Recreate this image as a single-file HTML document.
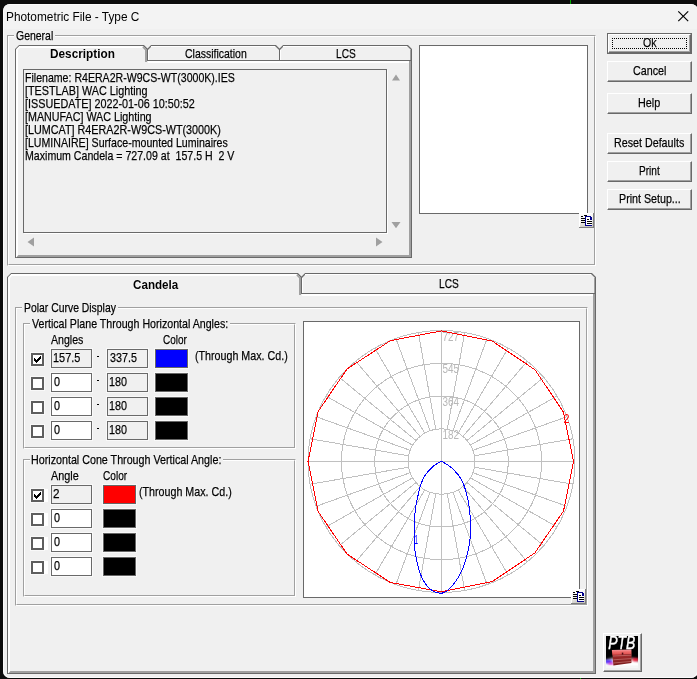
<!DOCTYPE html>
<html lang="en"><head><meta charset="utf-8"><title>Photometric File - Type C</title>
<style>
html,body{margin:0;padding:0}
body{width:697px;height:679px;overflow:hidden;background:#0c0c0c;position:relative;font:13px/13px "Liberation Sans",sans-serif;color:#000}
#win{position:absolute;left:3px;top:4px;width:695px;height:674px;border-radius:7px;background:#f0f0f0;box-shadow:inset 0 0 0 1px #fbfbfb;overflow:hidden}
#title{position:absolute;left:1px;top:1px;width:698px;height:24px;background:#f3f3f3}
#ui div{position:absolute}
.t{position:absolute;white-space:pre;font:13px/13px "Liberation Sans",sans-serif;transform-origin:0 0;text-shadow:0 0 1px #fff,0 0 1px #fff;-webkit-text-stroke:.25px #000}
.t.b{font-weight:bold;-webkit-text-stroke:0}
.t.s12{font-size:12px;line-height:12px;-webkit-text-stroke:0;text-shadow:none}
.grp{box-sizing:border-box;border:1px solid #a0a0a0;border-right-color:#fff;border-bottom-color:#fff}
.grp i{position:absolute;left:0;top:0;right:0;bottom:0;border:1px solid #fff;border-right-color:#a0a0a0;border-bottom-color:#a0a0a0}
.btn{box-sizing:border-box;background:#f0f0f0;border:1px solid #fff;border-right-color:#696969;border-bottom-color:#696969}
.btn i{position:absolute;left:0;top:0;right:0;bottom:0;border-right:1px solid #a0a0a0;border-bottom:1px solid #a0a0a0}
.btn.def{border-color:#696969;}
.btn.def i{left:0;top:0;right:0;bottom:0;border:1px solid #fff;border-right-color:#696969;border-bottom-color:#696969;box-shadow:inset -1px -1px 0 #a0a0a0}
.btn.def b{position:absolute;left:4px;top:4px;right:4px;bottom:4px;border:1px dotted #000}
svg{position:absolute;left:0;top:0;will-change:transform}
.fld,.hl{box-shadow:0 0 0 1px rgba(255,255,255,.6)}
#txt{position:absolute;left:0;top:0;width:697px;height:679px;will-change:transform}
</style></head>
<body>
<div id="win"><div id="title"></div></div>
<div style="position:absolute;left:570px;top:0;width:1px;height:4px;background:#00aa00"></div>
<div style="position:absolute;left:580px;top:678px;width:1px;height:1px;background:#00aa00"></div>
<div id="ui">
<div class="grp" style="left:7px;top:35px;width:589px;height:231px"><i></i></div>
<div style="left:14px;top:35px;width:41px;height:2px;background:#f0f0f0"></div>
<div class="grp" style="left:15px;top:307px;width:573px;height:299px"><i></i></div>
<div style="left:22px;top:307px;width:96px;height:2px;background:#f0f0f0"></div>
<div class="grp" style="left:23px;top:323px;width:273px;height:126px"><i></i></div>
<div style="left:30px;top:323px;width:200px;height:2px;background:#f0f0f0"></div>
<div class="grp" style="left:23px;top:459px;width:273px;height:138px"><i></i></div>
<div style="left:30px;top:459px;width:193px;height:2px;background:#f0f0f0"></div>
<div style="left:23px;top:69px;width:364px;height:164px;border:1px solid #696969;box-shadow:1px 1px 0 #fff;box-sizing:border-box"></div>
<div style="left:419px;top:45px;width:169px;height:169px;border:1px solid #696969;background:#fff;box-sizing:border-box"></div>
<div style="left:303px;top:321px;width:277px;height:277px;border:1px solid #696969;background:#fff;box-sizing:border-box"></div>
<div class="btn def" style="left:607px;top:33px;width:85px;height:21px;"><i></i><b></b></div>
<div class="btn" style="left:607px;top:61px;width:85px;height:21px;"><i></i></div>
<div class="btn" style="left:607px;top:93px;width:85px;height:21px;"><i></i></div>
<div class="btn" style="left:607px;top:133px;width:85px;height:21px;"><i></i></div>
<div class="btn" style="left:607px;top:161px;width:85px;height:21px;"><i></i></div>
<div class="btn" style="left:607px;top:189px;width:85px;height:21px;"><i></i></div>
<div class="btn" style="left:603px;top:633px;width:39px;height:39px;"><i></i></div>
<div class="hl" style="left:31px;top:353px;width:13px;height:13px;border:2px solid #5e5e5e;box-sizing:border-box;background:#fff"></div>
<div class="fld" style="left:51px;top:349px;width:41px;height:19px;border:1px solid #696969;box-sizing:border-box;background:#f0f0f0"></div>
<div class="fld" style="left:107px;top:349px;width:41px;height:19px;border:1px solid #696969;box-sizing:border-box;background:#f0f0f0"></div>
<div class="hl" style="left:155px;top:349px;width:33px;height:19px;border:1px solid #666;box-sizing:border-box;background:#0000ff"></div>
<div class="hl" style="left:31px;top:377px;width:13px;height:13px;border:2px solid #5e5e5e;box-sizing:border-box;background:#fff"></div>
<div class="fld" style="left:51px;top:373px;width:41px;height:19px;border:1px solid #696969;box-sizing:border-box;background:#fff"></div>
<div class="fld" style="left:107px;top:373px;width:41px;height:19px;border:1px solid #696969;box-sizing:border-box;background:#f0f0f0"></div>
<div class="hl" style="left:155px;top:373px;width:33px;height:19px;border:1px solid #666;box-sizing:border-box;background:#000"></div>
<div class="hl" style="left:31px;top:401px;width:13px;height:13px;border:2px solid #5e5e5e;box-sizing:border-box;background:#fff"></div>
<div class="fld" style="left:51px;top:397px;width:41px;height:19px;border:1px solid #696969;box-sizing:border-box;background:#fff"></div>
<div class="fld" style="left:107px;top:397px;width:41px;height:19px;border:1px solid #696969;box-sizing:border-box;background:#f0f0f0"></div>
<div class="hl" style="left:155px;top:397px;width:33px;height:19px;border:1px solid #666;box-sizing:border-box;background:#000"></div>
<div class="hl" style="left:31px;top:425px;width:13px;height:13px;border:2px solid #5e5e5e;box-sizing:border-box;background:#fff"></div>
<div class="fld" style="left:51px;top:421px;width:41px;height:19px;border:1px solid #696969;box-sizing:border-box;background:#fff"></div>
<div class="fld" style="left:107px;top:421px;width:41px;height:19px;border:1px solid #696969;box-sizing:border-box;background:#f0f0f0"></div>
<div class="hl" style="left:155px;top:421px;width:33px;height:19px;border:1px solid #666;box-sizing:border-box;background:#000"></div>
<div style="left:44px;top:489px;width:4px;height:13px;background:#fff"></div>
<div class="hl" style="left:31px;top:489px;width:13px;height:13px;border:2px solid #5e5e5e;box-sizing:border-box;background:#fff"></div>
<div class="fld" style="left:51px;top:485px;width:41px;height:19px;border:1px solid #696969;box-sizing:border-box;background:#f0f0f0"></div>
<div class="hl" style="left:103px;top:485px;width:33px;height:19px;border:1px solid #666;box-sizing:border-box;background:#ff0000"></div>
<div style="left:44px;top:513px;width:4px;height:13px;background:#fff"></div>
<div class="hl" style="left:31px;top:513px;width:13px;height:13px;border:2px solid #5e5e5e;box-sizing:border-box;background:#fff"></div>
<div class="fld" style="left:51px;top:509px;width:41px;height:19px;border:1px solid #696969;box-sizing:border-box;background:#fff"></div>
<div class="hl" style="left:103px;top:509px;width:33px;height:19px;border:1px solid #666;box-sizing:border-box;background:#000"></div>
<div style="left:44px;top:537px;width:4px;height:13px;background:#fff"></div>
<div class="hl" style="left:31px;top:537px;width:13px;height:13px;border:2px solid #5e5e5e;box-sizing:border-box;background:#fff"></div>
<div class="fld" style="left:51px;top:533px;width:41px;height:19px;border:1px solid #696969;box-sizing:border-box;background:#fff"></div>
<div class="hl" style="left:103px;top:533px;width:33px;height:19px;border:1px solid #666;box-sizing:border-box;background:#000"></div>
<div style="left:44px;top:561px;width:4px;height:13px;background:#fff"></div>
<div class="hl" style="left:31px;top:561px;width:13px;height:13px;border:2px solid #5e5e5e;box-sizing:border-box;background:#fff"></div>
<div class="fld" style="left:51px;top:557px;width:41px;height:19px;border:1px solid #696969;box-sizing:border-box;background:#fff"></div>
<div class="hl" style="left:103px;top:557px;width:33px;height:19px;border:1px solid #666;box-sizing:border-box;background:#000"></div>
</div>
<svg width="697" height="679" viewBox="0 0 697 679" shape-rendering="crispEdges">
<defs>
<linearGradient id="ibg" x1="0" y1="0" x2="0.3" y2="1"><stop offset="0" stop-color="#fff"/><stop offset=".55" stop-color="#f4f3f0"/><stop offset="1" stop-color="#c8c6c0"/></linearGradient>
<linearGradient id="glow" x1="0" y1="0" x2="0" y2="1"><stop offset="0" stop-color="#000"/><stop offset=".35" stop-color="#3a2030"/><stop offset=".6" stop-color="#e8d8e0"/><stop offset=".8" stop-color="#fff"/><stop offset="1" stop-color="#f4f4f4"/></linearGradient>
<linearGradient id="blu" x1="0" y1="0" x2="0" y2="1"><stop offset="0" stop-color="#8080ff" stop-opacity="0"/><stop offset=".45" stop-color="#7040ff"/><stop offset=".75" stop-color="#c020e0"/><stop offset="1" stop-color="#ff60a0" stop-opacity="0"/></linearGradient>
<linearGradient id="redg" x1="0" y1="0" x2="0" y2="1"><stop offset="0" stop-color="#ff0020" stop-opacity="0"/><stop offset=".5" stop-color="#ff2040"/><stop offset="1" stop-color="#ff8090" stop-opacity="0"/></linearGradient>
<clipPath id="c32"><rect width="32" height="32"/></clipPath>
<filter id="bl1" x="-50%" y="-100%" width="200%" height="300%"><feGaussianBlur stdDeviation="1"/></filter>
<filter id="bl2" x="-20%" y="-50%" width="140%" height="200%"><feGaussianBlur stdDeviation="1.6"/></filter>
<linearGradient id="lid" x1="0" y1="0" x2="0" y2="1"><stop offset="0" stop-color="#f59aa0"/><stop offset=".4" stop-color="#ee6a68"/><stop offset="1" stop-color="#d84848"/></linearGradient>
<linearGradient id="front" x1="0" y1="0" x2="0" y2="1"><stop offset="0" stop-color="#a42c2c"/><stop offset="1" stop-color="#781a1a"/></linearGradient>
</defs>
<rect x="15" y="49" width="1" height="209" fill="#696969"/>
<rect x="16" y="49" width="2" height="206" fill="#fff"/>
<rect x="411" y="49" width="1" height="209" fill="#696969"/>
<rect x="409" y="61" width="2" height="196" fill="#a0a0a0"/>
<rect x="410" y="50" width="1" height="10" fill="#a0a0a0"/>
<rect x="15" y="257" width="397" height="1" fill="#696969"/>
<rect x="17" y="255" width="394" height="2" fill="#a0a0a0"/>
<path d="M16 255h2.4l-2.4 2.4z" fill="#fff" shape-rendering="auto"/>
<rect x="147" y="60" width="264" height="1" fill="#696969"/>
<rect x="148" y="61" width="261" height="2" fill="#fff"/>
<line x1="15.5" y1="49.5" x2="19.5" y2="45.5" stroke="#696969" stroke-width="1.2" shape-rendering="auto"/>
<rect x="19" y="45" width="125" height="1" fill="#696969"/>
<rect x="19" y="46" width="124" height="2" fill="#fff"/>
<line x1="16.6" y1="50" x2="20" y2="46.6" stroke="#fff" stroke-width="1.8" shape-rendering="auto"/>
<line x1="143.5" y1="45.5" x2="147.5" y2="49.5" stroke="#696969" stroke-width="1.2" shape-rendering="auto"/>
<line x1="142.8" y1="46.8" x2="145.4" y2="49.4" stroke="#a0a0a0" stroke-width="1.6" shape-rendering="auto"/>
<rect x="145" y="49" width="2" height="13" fill="#a0a0a0"/>
<rect x="147" y="49" width="1" height="12" fill="#696969"/>
<line x1="147.5" y1="49.5" x2="151.5" y2="45.5" stroke="#696969" stroke-width="1.2" shape-rendering="auto"/>
<rect x="151" y="45" width="125" height="1" fill="#696969"/>
<rect x="151" y="46" width="124" height="1" fill="#fff"/>
<rect x="148" y="50" width="1" height="10" fill="#fff"/>
<line x1="275.5" y1="45.5" x2="279.5" y2="49.5" stroke="#696969" stroke-width="1.2" shape-rendering="auto"/>
<rect x="279" y="49" width="1" height="12" fill="#696969"/>
<line x1="279.5" y1="49.5" x2="283.5" y2="45.5" stroke="#696969" stroke-width="1.2" shape-rendering="auto"/>
<rect x="283" y="45" width="125" height="1" fill="#696969"/>
<rect x="283" y="46" width="124" height="1" fill="#fff"/>
<rect x="280" y="50" width="1" height="10" fill="#fff"/>
<line x1="407.5" y1="45.5" x2="411.5" y2="49.5" stroke="#696969" stroke-width="1.2" shape-rendering="auto"/>
<rect x="7" y="277" width="1" height="397" fill="#696969"/>
<rect x="8" y="277" width="2" height="394" fill="#fff"/>
<rect x="595" y="277" width="1" height="397" fill="#696969"/>
<rect x="593" y="294" width="2" height="379" fill="#a0a0a0"/>
<rect x="594" y="278" width="1" height="15" fill="#a0a0a0"/>
<rect x="7" y="673" width="589" height="1" fill="#696969"/>
<rect x="9" y="671" width="586" height="2" fill="#a0a0a0"/>
<path d="M8 671h2.4l-2.4 2.4z" fill="#fff" shape-rendering="auto"/>
<rect x="301" y="293" width="294" height="1" fill="#696969"/>
<rect x="302" y="294" width="291" height="2" fill="#fff"/>
<line x1="7.5" y1="277.5" x2="11.5" y2="273.5" stroke="#696969" stroke-width="1.2" shape-rendering="auto"/>
<rect x="11" y="273" width="287" height="1" fill="#696969"/>
<rect x="11" y="274" width="286" height="2" fill="#fff"/>
<line x1="8.6" y1="278" x2="12" y2="274.6" stroke="#fff" stroke-width="1.8" shape-rendering="auto"/>
<line x1="297.5" y1="273.5" x2="301.5" y2="277.5" stroke="#696969" stroke-width="1.2" shape-rendering="auto"/>
<line x1="296.8" y1="274.8" x2="299.4" y2="277.4" stroke="#a0a0a0" stroke-width="1.6" shape-rendering="auto"/>
<rect x="299" y="277" width="2" height="18" fill="#a0a0a0"/>
<rect x="301" y="277" width="1" height="17" fill="#696969"/>
<line x1="301.5" y1="277.5" x2="305.5" y2="273.5" stroke="#696969" stroke-width="1.2" shape-rendering="auto"/>
<rect x="305" y="273" width="287" height="1" fill="#696969"/>
<rect x="305" y="274" width="286" height="1" fill="#fff"/>
<rect x="302" y="278" width="1" height="15" fill="#fff"/>
<line x1="591.5" y1="273.5" x2="595.5" y2="277.5" stroke="#696969" stroke-width="1.2" shape-rendering="auto"/>
<path d="M392 80.6L396 74.6l4 6z M391.5 222h9L396 228.2z M382.5 242l-6.5-4.5v9z M27.5 242l6.5-4.5v9z" fill="#a0a0a0" shape-rendering="auto"/>
<rect x="34" y="358" width="1" height="3" fill="#000"/>
<rect x="35" y="359" width="1" height="3" fill="#000"/>
<rect x="36" y="360" width="1" height="3" fill="#000"/>
<rect x="37" y="359" width="1" height="3" fill="#000"/>
<rect x="38" y="358" width="1" height="3" fill="#000"/>
<rect x="39" y="357" width="1" height="3" fill="#000"/>
<rect x="40" y="356" width="1" height="3" fill="#000"/>
<rect x="97" y="356" width="2" height="1" fill="#000"/>
<rect x="97" y="380" width="2" height="1" fill="#000"/>
<rect x="97" y="404" width="2" height="1" fill="#000"/>
<rect x="97" y="428" width="2" height="1" fill="#000"/>
<rect x="34" y="494" width="1" height="3" fill="#000"/>
<rect x="35" y="495" width="1" height="3" fill="#000"/>
<rect x="36" y="496" width="1" height="3" fill="#000"/>
<rect x="37" y="495" width="1" height="3" fill="#000"/>
<rect x="38" y="494" width="1" height="3" fill="#000"/>
<rect x="39" y="493" width="1" height="3" fill="#000"/>
<rect x="40" y="492" width="1" height="3" fill="#000"/>
<line x1="678.3" y1="11.3" x2="688.2" y2="21.2" stroke="#000" stroke-width="1.15" shape-rendering="auto"/>
<line x1="688.2" y1="11.3" x2="678.3" y2="21.2" stroke="#000" stroke-width="1.15" shape-rendering="auto"/>
<g transform="translate(579,213)"><rect x="0" y="0" width="15" height="15" fill="url(#ibg)"/><rect x="0" y="0" width="15" height="1" fill="#fff"/><rect x="0" y="0" width="1" height="15" fill="#fff"/><rect x="14" y="0" width="1" height="15" fill="#808080"/><rect x="0" y="14" width="15" height="1" fill="#808080"/><path d="M2 3h2v1h-2z M2 5h4v1h-4z M2 7h4v1h-4z M2 9h4v1h-4z M5 2h3v1h-3z" fill="#000"/><path d="M6 3h6v1h1v3h-2v-3h-4v8h6v1h-7z" fill="#00008b"/><path d="M7 4h4v3h2v5h-6z" fill="#fff"/><path d="M8 6h2v1h-2z M8 8h5v1h-5z M8 10h5v1h-5z" fill="#000"/></g>
<g transform="translate(571,589)"><rect x="0" y="0" width="15" height="15" fill="url(#ibg)"/><rect x="0" y="0" width="15" height="1" fill="#fff"/><rect x="0" y="0" width="1" height="15" fill="#fff"/><rect x="14" y="0" width="1" height="15" fill="#808080"/><rect x="0" y="14" width="15" height="1" fill="#808080"/><path d="M2 3h2v1h-2z M2 5h4v1h-4z M2 7h4v1h-4z M2 9h4v1h-4z M5 2h3v1h-3z" fill="#000"/><path d="M6 3h6v1h1v3h-2v-3h-4v8h6v1h-7z" fill="#00008b"/><path d="M7 4h4v3h2v5h-6z" fill="#fff"/><path d="M8 6h2v1h-2z M8 8h5v1h-5z M8 10h5v1h-5z" fill="#000"/></g>
<g fill="none" stroke="#c0c0c0" stroke-width="1" shape-rendering="crispEdges"><ellipse cx="441.5" cy="461.5" rx="133.50" ry="131.00"/><ellipse cx="441.5" cy="461.5" rx="100.12" ry="98.25"/><ellipse cx="441.5" cy="461.5" rx="66.75" ry="65.50"/><ellipse cx="441.5" cy="461.5" rx="33.38" ry="32.75"/><line x1="447.30" y1="429.25" x2="464.68" y2="332.49"/><line x1="452.91" y1="430.73" x2="487.16" y2="338.40"/><line x1="458.19" y1="433.14" x2="508.25" y2="348.05"/><line x1="462.95" y1="436.41" x2="527.31" y2="361.15"/><line x1="467.07" y1="440.45" x2="543.77" y2="377.29"/><line x1="470.40" y1="445.12" x2="557.11" y2="396.00"/><line x1="472.86" y1="450.30" x2="566.95" y2="416.70"/><line x1="474.37" y1="455.81" x2="572.97" y2="438.75"/><line x1="474.37" y1="467.19" x2="572.97" y2="484.25"/><line x1="472.86" y1="472.70" x2="566.95" y2="506.30"/><line x1="470.40" y1="477.88" x2="557.11" y2="527.00"/><line x1="467.07" y1="482.55" x2="543.77" y2="545.71"/><line x1="462.95" y1="486.59" x2="527.31" y2="561.85"/><line x1="458.19" y1="489.86" x2="508.25" y2="574.95"/><line x1="452.91" y1="492.27" x2="487.16" y2="584.60"/><line x1="447.30" y1="493.75" x2="464.68" y2="590.51"/><line x1="435.70" y1="493.75" x2="418.32" y2="590.51"/><line x1="430.09" y1="492.27" x2="395.84" y2="584.60"/><line x1="424.81" y1="489.86" x2="374.75" y2="574.95"/><line x1="420.05" y1="486.59" x2="355.69" y2="561.85"/><line x1="415.93" y1="482.55" x2="339.23" y2="545.71"/><line x1="412.60" y1="477.88" x2="325.89" y2="527.00"/><line x1="410.14" y1="472.70" x2="316.05" y2="506.30"/><line x1="408.63" y1="467.19" x2="310.03" y2="484.25"/><line x1="408.63" y1="455.81" x2="310.03" y2="438.75"/><line x1="410.14" y1="450.30" x2="316.05" y2="416.70"/><line x1="412.60" y1="445.12" x2="325.89" y2="396.00"/><line x1="415.93" y1="440.45" x2="339.23" y2="377.29"/><line x1="420.05" y1="436.41" x2="355.69" y2="361.15"/><line x1="424.81" y1="433.14" x2="374.75" y2="348.05"/><line x1="430.09" y1="430.73" x2="395.84" y2="338.40"/><line x1="435.70" y1="429.25" x2="418.32" y2="332.49"/><line x1="308.0" y1="461.5" x2="575.0" y2="461.5"/><line x1="441.5" y1="330.5" x2="441.5" y2="592.5"/></g>
<text x="442.5" y="340.5" font-family="Liberation Sans, sans-serif" font-size="13" fill="#b8b8b8" textLength="16.5" lengthAdjust="spacingAndGlyphs">727</text>
<text x="442.5" y="373.2" font-family="Liberation Sans, sans-serif" font-size="13" fill="#b8b8b8" textLength="16.5" lengthAdjust="spacingAndGlyphs">545</text>
<text x="442.5" y="406.0" font-family="Liberation Sans, sans-serif" font-size="13" fill="#b8b8b8" textLength="16.5" lengthAdjust="spacingAndGlyphs">364</text>
<text x="442.5" y="438.8" font-family="Liberation Sans, sans-serif" font-size="13" fill="#b8b8b8" textLength="16.5" lengthAdjust="spacingAndGlyphs">182</text>
<polygon points="441.5,330.9 492.3,341.1 535.0,369.8 563.4,412.0 573.5,461.5 563.5,511.1 534.8,553.0 492.2,581.6 441.5,591.8 390.4,582.5 347.1,554.1 318.2,511.6 308.0,461.5 318.2,411.4 347.1,368.9 390.5,340.6" fill="none" stroke="#ff0000" stroke-width="1" shape-rendering="crispEdges"/>
<path d="M441.5 461.5L442.9 462.1L443.9 462.7L445.2 463.4L446.4 464.1L447.7 465.0L449.0 465.9L450.3 466.8L451.5 467.8L452.6 468.8L453.7 469.8L454.7 470.9L455.7 472.0L456.8 473.2L457.9 474.5L458.9 475.8L459.9 477.2L460.8 478.5L461.5 479.8L462.1 481.0L462.7 482.3L463.3 483.6L463.8 484.9L464.3 486.3L464.8 487.8L465.3 489.3L465.7 490.8L466.2 492.4L466.6 494.1L467.0 495.8L467.4 497.7L467.9 499.7L468.3 501.8L468.6 503.9L469.0 506.1L469.3 508.5L469.6 511.0L469.9 513.6L470.2 516.3L470.4 519.1L470.5 521.9L470.6 524.9L470.6 527.9L470.6 531.0L470.4 534.2L470.2 537.4L469.9 540.6L469.4 543.9L468.9 547.1L468.2 550.3L467.5 553.5L466.6 556.7L465.7 559.9L464.6 563.1L463.5 566.4L462.2 569.6L460.8 572.7L459.3 575.6L457.7 578.3L455.9 580.9L454.1 583.4L452.2 585.9L450.2 588.1L448.1 590.1L446.0 591.5L443.8 592.4L441.5 593.5L439.2 593.1L437.0 592.7L434.8 591.9L432.6 590.8L430.5 589.3L428.5 587.5L426.5 585.3L424.7 582.8L423.0 579.9L421.5 576.7L420.1 573.3L418.9 569.6L417.8 565.7L416.9 561.7L416.1 557.8L415.4 553.9L414.9 550.0L414.5 545.8L414.3 541.6L414.3 537.4L414.3 533.5L414.3 529.8L414.4 526.4L414.4 523.2L414.5 520.2L414.7 517.4L414.8 514.6L415.1 511.9L415.4 509.3L415.8 506.8L416.1 504.3L416.6 502.0L417.0 499.7L417.5 497.6L418.0 495.5L418.5 493.7L418.8 492.1L419.1 490.6L419.4 489.2L419.8 487.7L420.2 486.3L420.7 485.0L421.2 483.6L421.7 482.3L422.2 481.1L422.7 479.9L423.2 478.8L423.8 477.7L424.4 476.6L425.0 475.5L425.7 474.5L426.5 473.4L427.3 472.4L428.3 471.3L429.3 470.2L430.4 469.1L431.3 468.2L432.1 467.5L432.8 466.8L433.4 466.2L434.1 465.7L434.7 465.2L435.4 464.7L436.1 464.2L436.8 463.7L437.6 463.3L438.5 462.8L439.4 462.3L440.3 462.0L441.5 461.5Z" fill="none" stroke="#0000ff" stroke-width="1" stroke-linejoin="round" shape-rendering="crispEdges"/>
<text x="414.6" y="544" font-family="Liberation Sans, sans-serif" font-size="13" fill="#0000ff" textLength="3.6" lengthAdjust="spacingAndGlyphs">1</text>
<text x="563.6" y="423" font-family="Liberation Sans, sans-serif" font-size="13" fill="#ff0000" textLength="6" lengthAdjust="spacingAndGlyphs">2</text>
<g transform="translate(606,636)" clip-path="url(#c32)" shape-rendering="auto">
<rect width="32" height="32" fill="#000"/>
<ellipse cx="16" cy="30" rx="21" ry="8.5" fill="#fff" filter="url(#bl2)"/>
<ellipse cx="2.5" cy="25.6" rx="4.2" ry="1.9" fill="#4a28ff" filter="url(#bl1)"/>
<ellipse cx="5" cy="27.6" rx="3" ry="1.2" fill="#e020c0" filter="url(#bl1)"/>
<ellipse cx="29.5" cy="23.6" rx="3.6" ry="1.6" fill="#ff1030" filter="url(#bl1)"/>
<rect y="29.5" width="32" height="2.5" fill="#f6f6f6"/>
<path d="M5.8 14L25.4 13.6L25.6 18.4L6.4 19.2z" fill="url(#lid)"/>
<path d="M6.4 18.8L25.6 18.2L25.4 27L7.4 29.6z" fill="url(#front)"/>
<path d="M7 20L25.4 19.2M7.2 23.8L25.4 22.6M7.4 27L25.4 25.4" stroke="#cf8582" stroke-width=".6" fill="none"/>
<rect x="15.8" y="16.6" width="1.5" height="2" fill="#501018"/>
<text x="2.2" y="12.5" font-family="Liberation Sans, sans-serif" font-style="italic" font-size="18" fill="#fff" stroke="#fff" stroke-width=".45" textLength="27" lengthAdjust="spacingAndGlyphs">PTB</text>
</g>
</svg>
<div id="txt">
<span class="t s12" style="left:6.01px;top:10.75px;transform:scaleX(0.9869)">Photometric File - Type C</span>
<span class="t" style="left:16.40px;top:29.00px;transform:scaleX(0.8045)">General</span>
<span class="t b" style="left:50.32px;top:47.00px;transform:scaleX(0.9071)">Description</span>
<span class="t" style="left:185.40px;top:47.00px;transform:scaleX(0.8067)">Classification</span>
<span class="t" style="left:336.22px;top:47.00px;transform:scaleX(0.7789)">LCS</span>
<span class="t" style="left:25.19px;top:71.00px;transform:scaleX(0.8137)">Filename: R4ERA2R-W9CS-WT(3000K).IES</span>
<span class="t" style="left:25.17px;top:84.00px;transform:scaleX(0.8302)">[TESTLAB] WAC Lighting</span>
<span class="t" style="left:25.17px;top:97.00px;transform:scaleX(0.8311)">[ISSUEDATE] 2022-01-06 10:50:52</span>
<span class="t" style="left:25.17px;top:110.00px;transform:scaleX(0.8251)">[MANUFAC] WAC Lighting</span>
<span class="t" style="left:25.17px;top:123.00px;transform:scaleX(0.8303)">[LUMCAT] R4ERA2R-W9CS-WT(3000K)</span>
<span class="t" style="left:25.18px;top:136.00px;transform:scaleX(0.8158)">[LUMINAIRE] Surface-mounted Luminaires</span>
<span class="t" style="left:25.18px;top:149.00px;transform:scaleX(0.8152)">Maximum Candela = 727.09 at  157.5 H  2 V</span>
<span class="t" style="left:642.59px;top:36.00px;transform:scaleX(0.8125)">Ok</span>
<span class="t" style="left:633.38px;top:64.00px;transform:scaleX(0.8258)">Cancel</span>
<span class="t" style="left:638.17px;top:96.00px;transform:scaleX(0.8317)">Help</span>
<span class="t" style="left:614.18px;top:136.00px;transform:scaleX(0.8239)">Reset Defaults</span>
<span class="t" style="left:639.22px;top:164.00px;transform:scaleX(0.7767)">Print</span>
<span class="t" style="left:618.68px;top:192.00px;transform:scaleX(0.8219)">Print Setup...</span>
<span class="t b" style="left:132.55px;top:278.00px;transform:scaleX(0.8955)">Candela</span>
<span class="t" style="left:438.72px;top:277.00px;transform:scaleX(0.7789)">LCS</span>
<span class="t" style="left:24.20px;top:301.00px;transform:scaleX(0.8000)">Polar Curve Display</span>
<span class="t" style="left:31.80px;top:317.00px;transform:scaleX(0.8185)">Vertical Plane Through Horizontal Angles:</span>
<span class="t" style="left:51.00px;top:333.00px;transform:scaleX(0.8153)">Angles</span>
<span class="t" style="left:163.43px;top:333.00px;transform:scaleX(0.7667)">Color</span>
<span class="t" style="left:194.88px;top:349.00px;transform:scaleX(0.8225)">(Through Max. Cd.)</span>
<span class="t" style="left:53.16px;top:351.00px;transform:scaleX(0.8387)">157.5</span>
<span class="t" style="left:109.59px;top:351.00px;transform:scaleX(0.8254)">337.5</span>
<span class="t" style="left:53.58px;top:375.00px;transform:scaleX(0.8320)">0</span>
<span class="t" style="left:109.17px;top:375.00px;transform:scaleX(0.8296)">180</span>
<span class="t" style="left:53.58px;top:399.00px;transform:scaleX(0.8320)">0</span>
<span class="t" style="left:109.17px;top:399.00px;transform:scaleX(0.8296)">180</span>
<span class="t" style="left:53.58px;top:423.00px;transform:scaleX(0.8320)">0</span>
<span class="t" style="left:109.17px;top:423.00px;transform:scaleX(0.8296)">180</span>
<span class="t" style="left:31.18px;top:453.00px;transform:scaleX(0.8240)">Horizontal Cone Through Vertical Angle:</span>
<span class="t" style="left:51.00px;top:469.00px;transform:scaleX(0.8336)">Angle</span>
<span class="t" style="left:102.92px;top:469.00px;transform:scaleX(0.7767)">Color</span>
<span class="t" style="left:138.88px;top:485.00px;transform:scaleX(0.8225)">(Through Max. Cd.)</span>
<span class="t" style="left:53.32px;top:487.00px;transform:scaleX(0.9043)">2</span>
<span class="t" style="left:53.58px;top:511.00px;transform:scaleX(0.8320)">0</span>
<span class="t" style="left:53.58px;top:535.00px;transform:scaleX(0.8320)">0</span>
<span class="t" style="left:53.58px;top:559.00px;transform:scaleX(0.8320)">0</span>
</div>
</body></html>
